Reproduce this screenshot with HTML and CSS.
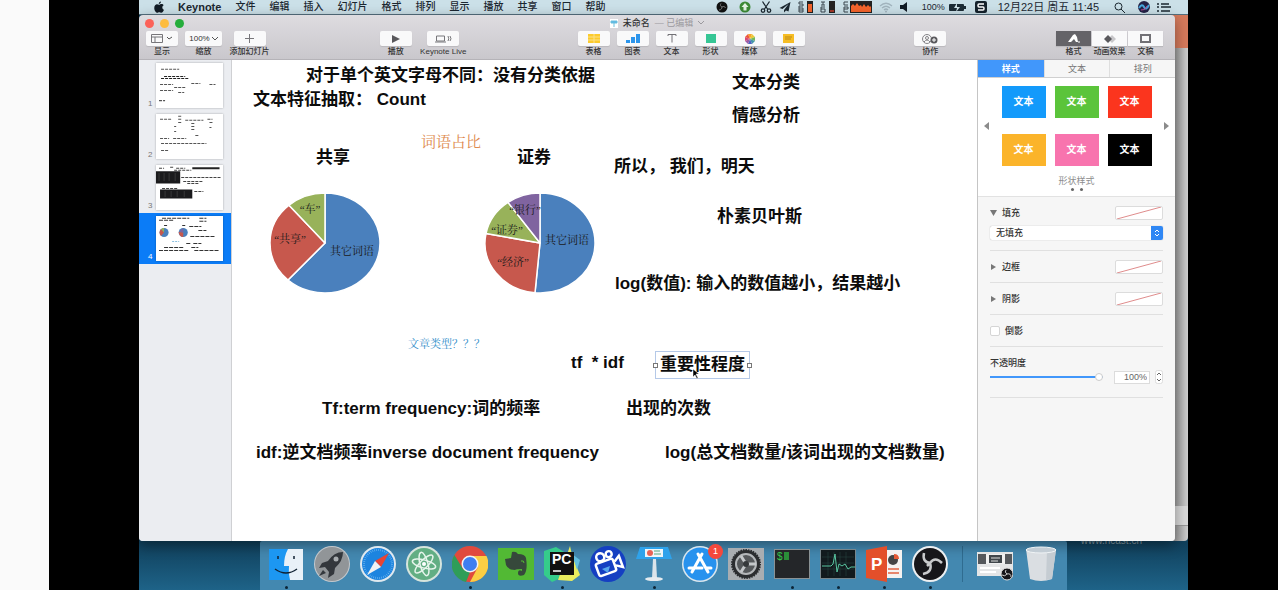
FILE: index.html
```html
<!DOCTYPE html>
<html lang="zh-CN">
<head>
    <meta charset="UTF-8">
    <meta name="viewport" content="width=device-width, initial-scale=1.0">
    <title>未命名</title>
    <link rel="stylesheet" href="styles.css">
</head>
<body>
    <div class="side-strip"></div>
    <div class="stage">
        <div class="desktop">
            <header class="menubar">
                <nav class="menus">
                    <button class="apple" aria-label="Apple"><svg width="10" height="12" viewBox="0 0 20 24"><path d="M14 1c0 3-2 5-4.500 5C9.500 3 11.500 1.500 14 1zM10 7.500C11 7.500 12.500 6 15 6c2 0 3.500 1 4.300 2.300C15.500 10.500 16 16 20 17.500 19 20 17 23.500 14.500 23.500c-1.500 0-2-1-4-1s-2.600 1-4 1C3.500 23.500.5 18.500.5 14 .5 9 3.500 6.500 6 6.500c1.800 0 3 1 4 1z" fill="#111b25"/></svg></button>
                    <button class="app-name">Keynote</button>
                    <button>文件</button>
                    <button>编辑</button>
                    <button>插入</button>
                    <button>幻灯片</button>
                    <button>格式</button>
                    <button>排列</button>
                    <button>显示</button>
                    <button>播放</button>
                    <button>共享</button>
                    <button>窗口</button>
                    <button>帮助</button>
                </nav>
                <div class="status">
                    <svg width="12" height="12" viewBox="0 0 24 24"><circle cx="12" cy="12" r="11" fill="#111"/><path d="M12 12c-3-1-4-4-2-7M12 12c3-2 6-1 7 2M12 12c0 3-2 6-6 6" fill="none" stroke="#777" stroke-width="2"/></svg>
                    <svg class="update" width="12" height="12" viewBox="0 0 24 24"><circle cx="12" cy="12" r="11" fill="#3c8a35"/><path d="M12 4l7 8h-4v7H9v-7H5z" fill="#e4f3e4"/></svg>
                    <svg width="12" height="12" viewBox="0 0 24 24"><g fill="none" stroke="#1b2730" stroke-width="2.500"><path d="M5 1l10 15M19 1L9 16"/><circle cx="6" cy="19" r="3.500"/><circle cx="18" cy="19" r="3.500"/></g></svg>
                    <svg width="12" height="12" viewBox="0 0 24 24"><path d="M23 2L1 14l6 2 12-10-9 12v5l4-4 5 2z" fill="#1b2730"/></svg>
                    <svg width="15" height="12" viewBox="0 0 15 12"><path d="M1 1h4M1 3h4M1 5h4M1 7h4M1 9h4M1 11h4M1 1v2M5 3v2M1 5v2M5 7v4M1 7v4" stroke="#3a474f" fill="none"/><path d="M9 0h6v12H9z" fill="#222"/><path d="M10 3h4v8h-4z" fill="#f4642c"/></svg>
                    <svg width="15" height="12" viewBox="0 0 15 12"><path d="M1 1h4M3 1v3M1 4h4M1 6h4M1 8h4M1 11h4M1 6v5M5 8v3" stroke="#3a474f" fill="none"/><path d="M9 0h6v12H9z" fill="#222"/><path d="M10 9h4v2h-4z" fill="#a3382a"/></svg>
                    <svg width="30" height="12" viewBox="0 0 30 12"><path d="M6 1H2v3h4M2 6h4v2H2zM2 11h4M2 8v3" stroke="#3a474f" fill="none"/><path d="M8 0h22v12H8z" fill="#222"/><path d="M9 11V5l2-2 2 2 2-3 2 3 2-1 1 2 2-3 2 3 2-2 2 2 1-1v6z" fill="#f4642c"/></svg>
                    <svg width="14" height="11" viewBox="0 0 28 22"><path d="M2 8q12-11 24 0M6 12q8-7 16 0M10 16q4-4 8 0" fill="none" stroke="#a2b4be" stroke-width="2.500"/><circle cx="14" cy="19" r="2" fill="#a2b4be"/></svg>
                    <svg class="speaker" width="8" height="10" viewBox="0 0 8 10"><path d="M0 3h3l4-3v10L3 7H0z" fill="#111b25"/></svg>
                    <span class="battery">100%<svg width="17" height="9" viewBox="0 0 17 9"><rect x="0" y="1" width="15" height="7" rx="1" fill="#1d2c36"/><path d="M15 3h2v3h-2z" fill="#1d2c36"/><path d="M8 0L5 5h3L7 9l4-5H8z" fill="#cfe2e9"/></svg></span>
                    <svg class="ime" width="12" height="12" viewBox="0 0 12 12"><rect width="12" height="12" rx="2" fill="#15222c"/><path d="M9 3H4Q3 3 3 4.500T4 6h4q1 0 1 1.500T8 9H3" fill="none" stroke="#fff" stroke-width="1.500"/></svg>
                    <span class="clock">12月22日 周五 11:45</span>
                    <svg class="search" width="11" height="11" viewBox="0 0 11 11"><circle cx="4.500" cy="4.500" r="3.500" fill="none" stroke="#1b2730"/><path d="M7 7l4 4" stroke="#1b2730"/></svg>
                    <svg width="12" height="12" viewBox="0 0 12 12"><circle cx="6" cy="6" r="6" fill="#252247"/><path d="M1 7q3-5 5-1t5-2" stroke="#47a6dd" stroke-width="2" fill="none"/><path d="M3 9q4 1 6-4" stroke="#bb4b96" fill="none"/></svg>
                    <svg width="14" height="9" viewBox="0 0 14 9"><path d="M0 1h2M4 1h8M0 4h2M4 4h10M0 8h2M4 8h9" stroke="#1b2730" stroke-width="1.500"/></svg>
                </div>
            </header>

            <div class="workspace">
                <div class="back-window"><i class="back-top"></i><i class="back-foot"></i></div>
                <span class="watermark">www.ncast.cn</span>

                <main class="window">
                    <div class="titlebar">
                        <div class="lights"><i class="close"></i><i class="min"></i><i class="max"></i></div>
                        <div class="doc-title">
                            <svg width="8" height="9" viewBox="0 0 8 9"><path d="M0 0h8v9H0z" fill="#fff"/><path d="M1 2h6v2H1zM4 4v4" fill="#58b6e8" stroke="#6cbfdc"/></svg>
                            <b>未命名</b><span>— 已编辑</span>
                            <svg width="6" height="4" viewBox="0 0 6 4"><path d="M0 0l3 3 3-3" fill="none" stroke="#9b999e"/></svg>
                        </div>
                    </div>
                    <div class="toolbar">
                        <div class="group">
                            <label class="tool"><button><svg width="22" height="9" viewBox="0 0 22 9"><path d="M.5.5h11v8H.5zM.5 3h11M4 3v5" fill="none" stroke="#77767a"/><path d="M16 3l2 2 3-2" fill="none" stroke="#555"/></svg></button>显示</label>
                            <label class="tool zoom"><button>100%<svg width="6" height="4" viewBox="0 0 6 4"><path d="M0 0l3 3 3-3" fill="none" stroke="#555"/></svg></button>缩放</label>
                            <label class="tool add"><button><svg width="9" height="9" viewBox="0 0 9 9"><path d="M4.500 0v9M0 4.500h9" stroke="#77767a"/></svg></button>添加幻灯片</label>
                        </div>
                        <div class="group">
                            <label class="tool"><button><svg width="8" height="8" viewBox="0 0 8 8"><path d="M0 0l8 4-8 4z" fill="#59585c"/></svg></button>播放</label>
                            <label class="tool live"><button><svg width="17" height="8" viewBox="0 0 17 8"><path d="M1.500 1h8v5h-8zM0 7h11M13 1q1.500 3 0 5M15 1q2 3 0 5" fill="none" stroke="#77767a"/></svg></button>Keynote Live</label>
                        </div>
                        <div class="group">
                            <label class="tool"><button><svg width="12" height="9" viewBox="0 0 12 9"><path d="M0 0h12v9H0z" fill="#fccb2d"/><path d="M6 0v9M0 3h12M0 6h12" stroke="#fbe18a"/></svg></button>表格</label>
                            <label class="tool"><button><svg width="14" height="9" viewBox="0 0 14 9"><path d="M0 6h4v3H0zM5 3h4v6H5zM10 0h4v9h-4z" fill="#2c95ec"/></svg></button>图表</label>
                            <label class="tool"><button><svg width="10" height="9" viewBox="0 0 10 9"><path d="M1 2V.5h8V2M5 .5v8" fill="none" stroke="#727176"/></svg></button>文本</label>
                            <label class="tool"><button><svg width="10" height="9" viewBox="0 0 10 9"><path d="M0 0h10v9H0z" fill="#36c695"/></svg></button>形状</label>
                            <label class="tool"><button><svg width="10" height="10" viewBox="-5 -5 10 10"><path d="M0 0L-2-5h4z" fill="#f6a32a"/><path d="M0 0l2-5 3 3z" fill="#e9c837"/><path d="M0 0l5-2v4z" fill="#73b85a"/><path d="M0 0l5 2-3 3z" fill="#4396a8"/><path d="M0 0l2 5h-4z" fill="#4d62c0"/><path d="M0 0l-2 5-3-3z" fill="#9a59a5"/><path d="M0 0l-5 2v-4z" fill="#d74a76"/><path d="M0 0l-5-2 3-3z" fill="#ed5639"/></svg></button>媒体</label>
                            <label class="tool"><button><svg width="11" height="9" viewBox="0 0 11 9"><path d="M0 0h11v9H0z" fill="#f6bd25"/><path d="M2 3h7M2 5h6" stroke="#bb8916"/></svg></button>批注</label>
                        </div>
                        <div class="group">
                            <label class="tool"><button><svg width="16" height="10" viewBox="0 0 16 10"><circle cx="5" cy="5" r="4.500" fill="none" stroke="#858488"/><circle cx="5" cy="4" r="1.500" fill="none" stroke="#858488"/><path d="M2 8q3-4 6 0" fill="none" stroke="#858488"/><circle cx="12" cy="6" r="3.500" fill="#59585c"/><path d="M12 4v4M10 6h4" stroke="#fff"/></svg></button>协作</label>
                        </div>
                        <div class="group segmented">
                            <label class="tool on"><button><svg width="12" height="9" viewBox="0 0 12 9"><path d="M0 8l5-7 2-1 2 3 1 5H8L6 5 3 8z" fill="#fff"/><path d="M10 8h2" stroke="#fff"/></svg></button>格式</label>
                            <label class="tool"><button><svg width="12" height="8" viewBox="0 0 12 8"><path d="M8 0l4 4-4 4-4-4z" fill="#c8c7ca"/><path d="M4 0l4 4-4 4-4-4z" fill="#59585c"/></svg></button>动画效果</label>
                            <label class="tool"><button><svg width="11" height="9" viewBox="0 0 11 9"><path d="M1 1h9v7H1z" fill="none" stroke="#727176" stroke-width="2"/></svg></button>文稿</label>
                        </div>
                    </div>

                    <div class="content">
                        <aside class="slides">
                            <div class="slide"><span>1</span>
                                <svg viewBox="0 0 66 44"><g stroke="#555" fill="none" stroke-dasharray="3 1"><path d="M5 6h18"/><path d="M8 13h21M5 15h28" stroke="#222"/><path d="M4 21h13M35 20h9M53 21h6M4 27h13M18 24h12M22 29h6M3 37h6"/></g></svg>
                            </div>
                            <div class="slide"><span>2</span>
                                <svg viewBox="0 0 66 44"><g stroke="#555" fill="none" stroke-dasharray="3 1"><path d="M22 2h4M4 5h12M22 5h4M29 6h18M51 5h5M22 8h4M35 9h3M53 8h3M35 12h3M18 12h2M35 15h3M53 13h2M18 17h2M39 21h3M4 24h9M17 24h13M5 29h45M5 36h7"/></g></svg>
                            </div>
                            <div class="slide"><span>3</span>
                                <svg viewBox="0 0 66 44"><path d="M0 6h24v12H0zM4 24h32v9H4z" fill="#1a1a1c"/><path d="M3 8v8M8 8v8M13 8v8M19 8v8M9 26v6M15 26v6M21 26v6M28 26v6" stroke="#555" stroke-dasharray="1 1"/><g stroke="#444" fill="none" stroke-dasharray="3 1"><path d="M3 3h5M14 2h4M20 3h9M18 5h17M25 12h40M27 16h20M31 18h12M6 23h16M38 26h9"/></g><path d="M36 3h27" stroke="#222" stroke-width="2"/></svg>
                            </div>
                            <div class="slide selected"><span>4</span>
                                <svg viewBox="0 0 66 44"><g stroke="#333" fill="none" stroke-dasharray="4 1"><path d="M6 2h27M3 4h15M43 2h7M43 5h7M8 9h3M26 9h3M33 10h12M42 14h8M34 20h24M30 27h5M37 27h8M8 31h20M35 31h7M3 34h30M38 34h25"/></g><path d="M16 25h7" stroke="#89bfe0" stroke-dasharray="2 1"/><g><circle cx="8" cy="16" r="4.500" fill="#4a80bd"/><path d="M8 16L5 19.500q-3-3.500 0-7z" fill="#c7584d"/><path d="M8 16l-3-3.500q1-1 3-1z" fill="#98b25a"/><circle cx="27" cy="16" r="4.500" fill="#4a80bd"/><path d="M27 16v4.500q-4 0-4.500-5z" fill="#c7584d"/><path d="M27 16l-4-1 4-3.500z" fill="#8064a0"/></g></svg>
                            </div>
                        </aside>

                        <section class="canvas">
                            <p class="text t-letters">对于单个英文字母不同：没有分类依据</p>
                            <p class="text t-extract">文本特征抽取： Count</p>
                            <p class="note t-ratio">词语占比</p>
                            <p class="text t-share">共享</p>
                            <p class="text t-bond">证券</p>
                            <p class="text t-classify">文本分类</p>
                            <p class="text t-emotion">情感分析</p>
                            <p class="text t-so">所以， 我们，明天</p>
                            <p class="text t-bayes">朴素贝叶斯</p>
                            <p class="text t-log">log(数值): 输入的数值越小，结果越小</p>
                            <svg class="pie pie-share" width="112" height="102" viewBox="-56 -51 112 102">
                                <g stroke="#fff" stroke-width="1.500" stroke-linejoin="round">
                                    <path d="M0 0V-50A55 50 0 1 1-37 37z" fill="#4a80bd"/>
                                    <path d="M0 0L-37 37A55 50 0 0 1-36-37.800z" fill="#c7584d"/>
                                    <path d="M0 0L-36-37.800A55 50 0 0 1 0-50z" fill="#98b25a"/>
                                </g>
                                <text x="27" y="12">其它词语</text><text x="-35" y="0">“共享”</text><text x="-15" y="-30">“车”</text>
                            </svg>
                            <svg class="pie pie-bond" width="112" height="102" viewBox="-56 -51 112 102">
                                <g stroke="#fff" stroke-width="1.500" stroke-linejoin="round">
                                    <path d="M0 0V-50A55 50 0 1 1-5 49.793z" fill="#4a80bd"/>
                                    <path d="M0 0L-5 49.793A55 50 0 0 1-54-9.500z" fill="#c7584d"/>
                                    <path d="M0 0L-54-9.500A55 50 0 0 1-32-40.660z" fill="#98b25a"/>
                                    <path d="M0 0L-32-40.660A55 50 0 0 1 0-50z" fill="#8064a0"/>
                                </g>
                                <text x="27" y="1">其它词语</text><text x="-27" y="23">“经济”</text><text x="-33" y="-9">“证券”</text><text x="-15" y="-29">“银行”</text>
                            </svg>
                            <p class="note t-kind">文章类型？？？</p>
                            <p class="text t-tfidf">tf &nbsp;* idf</p>
                            <p class="text t-weight">重要性程度</p>
                            <p class="text t-tf">Tf:term frequency:词的频率</p>
                            <p class="text t-times">出现的次数</p>
                            <p class="text t-idf">idf:逆文档频率inverse document frequency</p>
                            <p class="text t-total">log(总文档数量/该词出现的文档数量)</p>
                            <svg class="cursor" width="8" height="12" viewBox="0 0 8 12"><path d="M1 1v8l2-2 2 4 1-1-2-4h3z" fill="#000" stroke="#fff" stroke-width=".5"/></svg>
                        </section>

                        <aside class="inspector">
                            <div class="tabs">
                                <button class="active">样式</button><button>文本</button><button>排列</button>
                            </div>
                            <div class="styles">
                                <div class="picker">
                                    <button class="arrow" aria-label="上一页"><svg width="5" height="8" viewBox="0 0 5 8"><path d="M5 0v8L0 4z" fill="#8b8b8b"/></svg></button>
                                    <div class="swatches">
                                        <button class="blue">文本</button><button class="green">文本</button><button class="red">文本</button>
                                        <button class="yellow">文本</button><button class="pink">文本</button><button class="black">文本</button>
                                    </div>
                                    <button class="arrow" aria-label="下一页"><svg width="5" height="8" viewBox="0 0 5 8"><path d="M0 0v8l5-4z" fill="#8b8b8b"/></svg></button>
                                </div>
                                <div class="caption">形状样式</div>
                                <div class="dots"><i></i><i></i></div>
                            </div>
                            <div class="props">
                                <div class="prop fill">
                                    <div class="row"><svg width="7" height="6" viewBox="0 0 7 6"><path d="M0 0h7L3.500 6z" fill="#777"/></svg><label for="fill">填充</label><button class="well" aria-label="填充颜色"><svg viewBox="0 0 48 14" preserveAspectRatio="none"><path d="M1 14L47 0" stroke="#dc8080"/></svg></button></div>
                                    <div class="select-box"><select id="fill"><option>无填充</option></select><svg width="12" height="14" viewBox="0 0 12 14"><path d="M0 0h10q2 0 2 2v10q0 2-2 2H0z" fill="#2f87f4"/><path d="M4 6l2-2 2 2M4 8l2 2 2-2" fill="none" stroke="#fff"/></svg></div>
                                </div>
                                <div class="prop row"><svg width="7" height="6" viewBox="0 0 7 6"><path d="M1 0v6l5-3z" fill="#777"/></svg><span>边框</span><button class="well" aria-label="边框颜色"><svg viewBox="0 0 48 14" preserveAspectRatio="none"><path d="M1 14L47 0" stroke="#dc8080"/></svg></button></div>
                                <div class="prop row"><svg width="7" height="6" viewBox="0 0 7 6"><path d="M1 0v6l5-3z" fill="#777"/></svg><span>阴影</span><button class="well" aria-label="阴影颜色"><svg viewBox="0 0 48 14" preserveAspectRatio="none"><path d="M1 14L47 0" stroke="#dc8080"/></svg></button></div>
                                <label class="prop row"><input type="checkbox">倒影</label>
                                <div class="prop opacity">
                                    <label for="opacity">不透明度</label>
                                    <div class="row"><input id="opacity" type="range" value="100"><input class="percent" type="text" value="100%" aria-label="不透明度数值"><svg width="8" height="14" viewBox="0 0 8 14"><rect x=".5" y=".5" width="7" height="13" rx="2" fill="#fff" stroke="#ddd"/><path d="M2 5l2-2 2 2M2 9l2 2 2-2" fill="none" stroke="#666"/></svg></div>
                                </div>
                            </div>
                        </aside>
                    </div>
                </main>
            </div>

            <footer class="dock">
                <a href="#" class="running" aria-label="Finder"><svg viewBox="0 0 36 36"><path d="M1 3h34v31H1z" fill="#e9f1f8"/><path d="M1 3h19q-4 7-4 17h5q-1 7 1 14H1z" fill="#1c97f2"/><path d="M10 10v3M26 10v3M7 23q11 8 22 0" fill="none" stroke="#123" stroke-width="1.500"/></svg></a>
                <a href="#" aria-label="Launchpad"><svg viewBox="0 0 36 36"><circle cx="18" cy="18" r="18" fill="#c5c9cd"/><circle cx="18" cy="18" r="17" fill="#919598"/><path d="M29 6q-9 0-15 9l-6 2-3 5 6-1 4 5-1 6 6-4 1-6q8-7 8-16zM9 24l-4 6 7-3z" fill="#33373c"/><circle cx="22" cy="13" r="2.500" fill="#a9adb0"/></svg></a>
                <a href="#" aria-label="Safari"><svg viewBox="0 0 36 36"><circle cx="18" cy="18" r="18" fill="#e0e9ef"/><circle cx="18" cy="18" r="16" fill="#1d84df"/><circle cx="18" cy="18" r="14" fill="none" stroke="#86c5f5" stroke-width="2" stroke-dasharray=".5 1.500"/><path d="M29 7L15 15l6 6z" fill="#e84435"/><path d="M7 29l14-8-6-6z" fill="#f2f2f2"/></svg></a>
                <a href="#" aria-label="Atom"><svg viewBox="0 0 36 36"><circle cx="18" cy="18" r="18" fill="#d7e5dd"/><circle cx="18" cy="18" r="16" fill="#62ae83"/><g fill="none" stroke="#e6f4eb" stroke-width="1.500"><ellipse cx="18" cy="18" rx="12" ry="4" transform="rotate(15 18 18)"/><ellipse cx="18" cy="18" rx="12" ry="4" transform="rotate(75 18 18)"/><ellipse cx="18" cy="18" rx="12" ry="4" transform="rotate(135 18 18)"/></g><circle cx="18" cy="18" r="2" fill="#fff"/></svg></a>
                <a href="#" class="running" aria-label="Chrome"><svg viewBox="0 0 36 36"><circle cx="18" cy="18" r="18" fill="#e04a3d"/><path d="M2.400 9L11 23l7 3-4 10A18 18 0 0 1 2.400 9z" fill="#2f9d58"/><path d="M34.500 10H18l8 11-8 15A18 18 0 0 0 34.500 10z" fill="#fbce43"/><circle cx="18" cy="18" r="8.500" fill="#f3f3f3"/><circle cx="18" cy="18" r="7" fill="#3e7ef0"/></svg></a>
                <a href="#" aria-label="Evernote"><svg viewBox="0 0 36 36"><path d="M0 2h36v32H0z" fill="#52b934"/><path d="M14 6q4-1 6 2 7 0 8 4 2 12-2 17-6 2-6-2t4-2v-2q-6 0-7 1-7 0-9-5l-1-6 6-1z" fill="#36483b"/><path d="M23 15q3-1 3 2" fill="none" stroke="#52b934"/></svg></a>
                <a href="#" class="running" aria-label="PyCharm"><svg viewBox="0 0 36 36"><path d="M0 5l12-4 13 8-8 23-9 4L0 29z" fill="#35cc8b"/><path d="M26 0l2 9 8 20-8 6-14-1z" fill="#e9ec5e"/><path d="M28 8l8 6-3 10z" fill="#62bfe0"/><path d="M6 6h24v23H6z" fill="#111"/><text x="8" y="18" class="pc">PC</text><path d="M9 25h8" stroke="#fff" stroke-width="1.500"/></svg></a>
                <a href="#" aria-label="录屏"><svg viewBox="0 0 36 36"><circle cx="18" cy="18" r="18" fill="#153fc2"/><g transform="rotate(-20 18 18)" fill="none" stroke="#fff" stroke-width="2.500"><circle cx="13" cy="9" r="4"/><circle cx="22" cy="9" r="3"/><rect x="6" y="14" width="18" height="13" rx="2"/><path d="M25 18l6-4v12l-6-4"/></g><path d="M12 23l8-3-2 7z" fill="#57a5ec"/></svg></a>
                <a href="#" class="running" aria-label="Keynote"><svg viewBox="0 0 36 36"><path d="M4 1h28l4 12H0z" fill="#2ea2eb"/><path d="M9 3h18v8H9z" fill="#eff6fa"/><circle cx="14" cy="7" r="3" fill="#e76356"/><path d="M18 5h6M18 8h7" stroke="#53aa81"/><path d="M17 13h3l1 19h-5z" fill="#dbe4ea"/><ellipse cx="18" cy="33" rx="9" ry="2" fill="#e5ebef"/></svg></a>
                <a href="#" aria-label="App Store"><svg viewBox="0 0 36 36"><circle cx="18" cy="18" r="18" fill="#dbe7ee"/><circle cx="18" cy="18" r="16.500" fill="#2792ee"/><path d="M20 8L10 26M16 8l10 18M7 22h13M24 22h5" fill="none" stroke="#fff" stroke-width="3" stroke-linecap="round"/></svg><span class="badge">1</span></a>
                <a href="#" aria-label="系统偏好设置"><svg viewBox="0 0 36 36"><path d="M0 2h36v32H0z" fill="#a9adb1"/><circle cx="18" cy="18" r="14" fill="#2b2d30"/><circle cx="18" cy="18" r="14" fill="none" stroke="#2b2d30" stroke-width="2" stroke-dasharray="1.500 1"/><circle cx="18" cy="18" r="10" fill="#55585b" stroke="#b4b7ba" stroke-width="2"/><path d="M18 18l-5-8M18 18l-5 8M18 18h10" stroke="#c4c7ca" stroke-width="3"/><circle cx="18" cy="18" r="3" fill="#35383b"/></svg></a>
                <a href="#" class="running" aria-label="终端"><svg viewBox="0 0 36 36"><path d="M0 3h36v30H0z" fill="#8a9295"/><path d="M1 4h34v28H1z" fill="#242629"/><text x="3" y="14" class="term">$</text><path d="M10 6h5v8h-5z" fill="#2a8e38"/></svg></a>
                <a href="#" class="running" aria-label="活动监视器"><svg viewBox="0 0 36 36"><path d="M0 3h36v30H0z" fill="#77858b"/><path d="M1 4h34v28H1z" fill="#121a1d"/><path d="M2 11h32M2 17h32M2 23h32M8 6v24M14 6v24M20 6v24M26 6v24" stroke="#2b4846" stroke-width=".5"/><path d="M2 20h9l2-2 2-10 2 18 2-8 3 2 3-2 3 5 3-2h4" fill="none" stroke="#58c5a0"/></svg></a>
                <a href="#" class="running" aria-label="PowerPoint"><svg viewBox="0 0 36 36"><path d="M18 4h18v28H18z" fill="#f5f2f0"/><circle cx="27" cy="14" r="5" fill="#444"/><path d="M28 13V8q5 0 5 5z" fill="#e65b36"/><path d="M22 23h11M22 27h11" stroke="#e6866d" stroke-width="2"/><path d="M0 4l21-4v36L0 32z" fill="#e34f2a"/><text x="5" y="24" class="ppt">P</text></svg></a>
                <a href="#" class="running" aria-label="OBS"><svg viewBox="0 0 36 36"><circle cx="18" cy="18" r="18" fill="#edf0f2"/><circle cx="18" cy="18" r="16" fill="#17161a"/><path d="M18 17q-8-1-6-10M18 17q5-7 12 0M18 17q3 9-7 11M18 17l-3 3" fill="none" stroke="#c9cacc" stroke-width="2.500"/></svg></a>
                <i class="divider"></i>
                <a href="#" aria-label="最小化的窗口"><svg viewBox="0 0 36 36"><path d="M0 6h36v24H0z" fill="#e4e5e6"/><path d="M1 8h34v10H1z" fill="#55585c"/><path d="M9 8h19v10H9z" fill="#f0f0f0"/><path d="M12 9h13v8H12z" fill="#40464b"/><path d="M14 12h9M14 15h7" stroke="#ddd"/><path d="M3 22h20M3 26h16" stroke="#fff" stroke-width="2"/><circle cx="30" cy="28" r="6" fill="#17161a" stroke="#ddd"/><path d="M30 28q-3-2-1-4M30 28q4-1 4 3M30 28q-2 3-5 1" fill="none" stroke="#ccc"/></svg></a>
                <a href="#" aria-label="废纸篓"><svg viewBox="0 0 36 36"><path d="M3 3h30l-4 30q-11 4-22 0z" fill="#dadee2"/><path d="M24 4h9l-4 29-6 1z" fill="#c5ccd2"/><ellipse cx="18" cy="4" rx="15" ry="3" fill="#c3cdd5" stroke="#f0f4f6"/></svg></a>
            </footer>
        </div>
    </div>
</body>
</html>
```

FILE: styles.css
```css
* {
    box-sizing: border-box;
}

body {
    margin: 0;
    min-height: 100vh;
    display: flex;
    background-color: #000;
    color: #333;
    font-family: 'Liberation Sans', 'Noto Sans CJK SC', sans-serif;
}

button,
input,
select {
    margin: 0;
    padding: 0;
    border: 0;
    background: none;
    color: inherit;
    font: inherit;
}

svg {
    display: block;
    flex: none;
}

.side-strip {
    width: 49px;
    background-color: #fafafa;
}

.stage {
    flex: 1;
    display: flex;
    padding: 0 90px;
}

.desktop {
    flex: 1;
    min-width: 0;
    display: flex;
    flex-direction: column;
    background: linear-gradient(#10405c 92%, #1e6388);
}

/* menu bar */
.menubar {
    height: 15px;
    display: flex;
    align-items: center;
    justify-content: space-between;
    padding: 0 17px 0 15px;
    background-color: #cbe0e8;
    border-bottom: 1px solid #55707f;
    color: #1b2730;
    font-size: 10px;
    line-height: 14px;
    white-space: nowrap;
}

.menus,
.status,
.battery {
    display: flex;
    align-items: center;
}

.menus {
    gap: 14px;
    font-weight: 500;
}

.app-name {
    font-size: 11px;
    font-weight: bold;
}

.status {
    gap: 7px;
}

.update {
    margin: 0 2px 0 4px;
}

.speaker {
    margin-right: 7px;
}

.battery {
    gap: 4px;
    font-size: 9px;
}

.ime {
    margin: 0 4px 0 2px;
}

.search {
    margin: 0 6px 0 8px;
}

.clock {
    font-size: 11px;
}

/* window */
.workspace {
    flex: 1;
    position: relative;
    display: flex;
    padding-right: 13px;
}

.back-window {
    position: absolute;
    top: 0;
    right: 0;
    bottom: 0;
    width: 40px;
    background: linear-gradient(90deg, #999 66%, #cfcfcf);
    border-radius: 0 0 4px 4px;
}

.back-top {
    display: block;
    height: 33px;
    background-color: #d67a5c;
}

.back-foot {
    position: absolute;
    right: 0;
    bottom: 15px;
    width: 100%;
    height: 20px;
    background-color: #dadada;
    border-bottom: 1px solid #999;
}

.watermark {
    position: absolute;
    right: 46px;
    bottom: -6px;
    color: #80959f;
    font-size: 10px;
    line-height: 12px;
}

.window {
    flex: 1;
    min-width: 0;
    position: relative;
    display: flex;
    flex-direction: column;
    border-radius: 4px;
    overflow: hidden;
    background: linear-gradient(#dedce0, #c9c7cc 45px);
    box-shadow: 0 4px 14px rgba(0, 0, 0, .4);
}

.titlebar {
    height: 16px;
    display: grid;
    grid-template-columns: 1fr auto 1fr;
    align-items: center;
    padding: 0 6px;
}

.lights {
    display: flex;
    gap: 6px;
}

.lights i {
    width: 9px;
    height: 9px;
    border-radius: 50%;
}

.close {
    background-color: #fc6158;
}

.min {
    background-color: #fdbc40;
}

.max {
    background-color: #25ad3b;
}

.doc-title {
    display: flex;
    align-items: center;
    gap: 5px;
    font-size: 9px;
    line-height: 14px;
}

.doc-title b {
    font-weight: 500;
}

.doc-title span {
    color: #9b999e;
}

.toolbar {
    height: 29px;
    display: flex;
    justify-content: space-between;
    padding: 0 12px 0 7px;
    border-bottom: 1px solid #b5b3b8;
}

.group {
    display: flex;
    gap: 7px;
}

.tool {
    width: 32px;
    display: flex;
    flex-direction: column;
    align-items: center;
    font-size: 8px;
    font-weight: 500;
    line-height: 12px;
    white-space: nowrap;
}

.tool button {
    width: 32px;
    height: 15px;
    display: flex;
    align-items: center;
    justify-content: center;
    gap: 2px;
    border-radius: 2px;
    background-color: #f9f9fa;
    box-shadow: 0 1px 1px rgba(0, 0, 0, .1);
}

.zoom,
.zoom button {
    width: 37px;
}

.add {
    width: 41px;
}

.live {
    width: 49px;
}

.segmented {
    gap: 1px;
}

.segmented .tool,
.segmented button {
    width: 35px;
}

.segmented button {
    border-radius: 0;
}

.segmented .on button {
    background-color: #646368;
}

.content {
    flex: 1;
    display: grid;
    grid-template-columns: 93px 1fr 198px;
}

/* slide list */
.slides {
    background-color: #ebedf1;
    border-right: 1px solid #cfd0d3;
}

.slide {
    height: 51px;
    display: flex;
    align-items: flex-end;
    gap: 4px;
    padding: 3px 8px 3px 9px;
    color: #777;
    font-size: 8px;
    line-height: 9px;
}

.slide svg {
    flex: 1;
    height: 45px;
    background-color: #fff;
    box-shadow: 0 0 2px rgba(0, 0, 0, .3);
}

.selected {
    background-color: #0b7cf7;
    color: #fff;
}

/* slide canvas, objects are placed freely */
.canvas {
    position: relative;
    background-color: #fff;
    overflow: hidden;
}

.text,
.note {
    position: absolute;
    margin: 0;
    white-space: pre;
    line-height: 26px;
}

.text {
    color: #0c0c0c;
    font-size: 17px;
    font-weight: bold;
}

.note {
    font-family: 'Liberation Serif', 'Noto Serif CJK SC', 'Noto Sans CJK SC', serif;
}

.t-letters { left: 74px; top: 3px; }
.t-extract { left: 21px; top: 27px; }
.t-ratio { left: 189px; top: 69px; color: #de8a4e; font-size: 15px; }
.t-share { left: 84px; top: 85px; }
.t-bond { left: 285px; top: 85px; }
.t-classify { left: 500px; top: 10px; }
.t-emotion { left: 500px; top: 43px; }
.t-so { left: 382px; top: 94px; }
.t-bayes { left: 485px; top: 144px; }
.t-log { left: 383px; top: 211px; }
.t-kind { left: 176px; top: 271px; color: #2d8cc9; font-size: 11px; }
.t-tfidf { left: 339px; top: 290px; }
.t-tf { left: 90px; top: 336px; }
.t-times { left: 394px; top: 336px; }
.t-idf { left: 24px; top: 380px; }
.t-total { left: 433px; top: 380px; }

.t-weight {
    left: 423px;
    top: 291px;
    padding: 0 4px;
    border: 1px solid #b5c9e8;
}

.t-weight::before,
.t-weight::after {
    content: '';
    position: absolute;
    top: 11px;
    width: 3px;
    height: 3px;
    border: 1px solid #777;
    background-color: #fff;
}

.t-weight::before {
    left: -3px;
}

.t-weight::after {
    right: -3px;
}

.cursor {
    position: absolute;
    left: 460px;
    top: 308px;
}

.pie {
    position: absolute;
    top: 132px;
}

.pie-share {
    left: 37px;
}

.pie-bond {
    left: 252px;
}

.pie text {
    fill: #1a1a1a;
    font-family: 'Liberation Serif', 'Noto Serif CJK SC', 'Noto Sans CJK SC', serif;
    font-size: 11px;
    text-anchor: middle;
}

/* inspector */
.inspector {
    border-left: 1px solid #c5c5c5;
    background-color: #f6f6f6;
    font-size: 9px;
    line-height: 14px;
}

.tabs {
    height: 18px;
    display: grid;
    grid-template-columns: repeat(3, 1fr);
    border-bottom: 1px solid #d0d0d0;
    color: #777;
}

.tabs button + button {
    border-left: 1px solid #dedede;
}

.tabs .active {
    background-color: #4197fb;
    color: #fff;
    font-weight: bold;
}

.styles {
    height: 119px;
    padding: 8px 6px 0;
    background-color: #fff;
    border-bottom: 1px solid #e2e2e2;
}

.picker {
    display: flex;
    align-items: center;
    justify-content: space-between;
}

.swatches {
    display: grid;
    grid-template-columns: repeat(3, 44px);
    gap: 16px 9px;
}

.swatches button {
    height: 32px;
    color: #fff;
    font-size: 10px;
    font-weight: bold;
}

.blue { background-color: #139afb; }
.green { background-color: #5bc43b; }
.red { background-color: #fb351e; }
.yellow { background-color: #fbb42a; }
.pink { background-color: #f874ae; }
.black { background-color: #000; }

.caption {
    margin-top: 8px;
    color: #8d8d8d;
    text-align: center;
}

.dots {
    display: flex;
    justify-content: center;
    gap: 6px;
}

.dots i {
    width: 3px;
    height: 3px;
    border-radius: 50%;
    background-color: #666;
}

.props {
    padding: 0 12px;
    font-weight: 500;
}

.prop {
    min-height: 32px;
    border-bottom: 1px solid #e0e0e0;
}

.row {
    display: flex;
    align-items: center;
    gap: 5px;
}

.fill {
    height: 54px;
    padding-top: 9px;
}

.well {
    width: 48px;
    height: 14px;
    margin-left: auto;
    border: 1px solid #dcdcdc;
    border-radius: 2px;
    background-color: #fff;
}

.well svg {
    width: 100%;
    height: 100%;
}

.select-box {
    display: flex;
    margin-top: 6px;
    border-radius: 2px;
    background-color: #fff;
    box-shadow: 0 0 1px #999;
}

.select-box select {
    flex: 1;
    padding-left: 6px;
    appearance: none;
}

input[type=checkbox] {
    width: 10px;
    height: 10px;
    appearance: none;
    border: 1px solid #d5d5d5;
    border-radius: 2px;
    background-color: #fff;
}

.opacity {
    height: 51px;
    padding-top: 9px;
}

.opacity label {
    display: block;
    line-height: 14px;
}

input[type=range] {
    flex: 1;
    min-width: 0;
    height: 9px;
    margin-right: 6px;
    appearance: none;
    background: linear-gradient(#4197fb, #4197fb) center / 100% 2px no-repeat;
}

input[type=range]::-webkit-slider-thumb {
    appearance: none;
    width: 8px;
    height: 8px;
    border: 1px solid #ccc;
    border-radius: 50%;
    background-color: #fff;
}

.percent {
    width: 36px;
    height: 13px;
    padding-right: 2px;
    border: 1px solid #dcdcdc;
    background-color: #fff;
    color: #666;
    text-align: right;
}

/* dock */
.dock {
    height: 49px;
    align-self: center;
    display: flex;
    align-items: flex-start;
    gap: 10px;
    padding: 5px 8px 0;
    background-color: #4388b0;
    border-radius: 2px 2px 0 0;
}

.dock a {
    position: relative;
    width: 36px;
    height: 44px;
}

.dock svg {
    width: 36px;
    height: 36px;
}

.running::after {
    content: '';
    position: absolute;
    left: 17px;
    bottom: 1px;
    width: 3px;
    height: 3px;
    border-radius: 50%;
    background-color: #0c2536;
}

.badge {
    position: absolute;
    top: -2px;
    right: -5px;
    width: 15px;
    height: 15px;
    border-radius: 50%;
    background-color: #f4493d;
    color: #fff;
    font-size: 9px;
    line-height: 15px;
    text-align: center;
}

.divider {
    width: 1px;
    height: 36px;
    margin: 0 4px;
    background-color: #2f6c90;
}

.pc {
    fill: #fff;
    font-size: 14px;
    font-weight: bold;
}

.term {
    fill: #36c84b;
    font-size: 10px;
}

.ppt {
    fill: #fff;
    font-size: 17px;
    font-weight: bold;
}
```
